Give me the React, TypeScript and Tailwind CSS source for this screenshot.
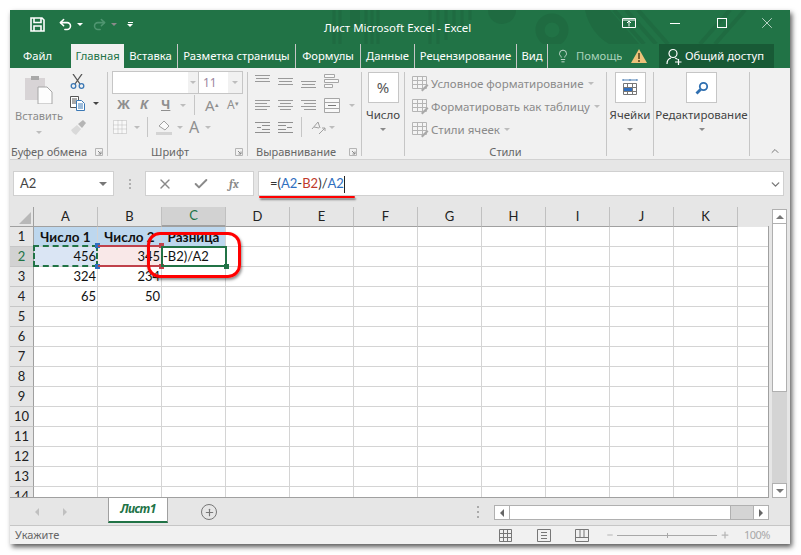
import { Lightbulb, Undo2, Redo2, X, Check, ChevronUp, ChevronDown, Plus, Minus } from "lucide-react";

const ui = { fontFamily: '"Noto Sans", "Open Sans", sans-serif' };
const cellFont = { fontFamily: 'Lato, "Open Sans", sans-serif' };

const Caret = ({ className = "" }: { className?: string }) => (
  <span className={`inline-block w-0 h-0 border-x-[3px] border-x-transparent border-t-[3px] border-t-[#8a8a8a] ${className}`} />
);

const Launcher = () => (
  <svg width="8" height="8" viewBox="0 0 8 8" className="shrink-0">
    <path d="M.5.5h7v7h-7z" fill="none" stroke="#b5b5b5" />
    <path d="M3 3l3 3M6 3.5V6H3.500" fill="none" stroke="#8a8a8a" />
  </svg>
);

const Lines = ({ rows, w = 16, h = 12, color = "#9a9a9a" }: { rows: [number, number, number][]; w?: number; h?: number; color?: string }) => (
  <svg width={w} height={h} viewBox={`0 0 ${w} ${h}`} className="shrink-0">
    {rows.map(([y, a, b], i) => (
      <path key={i} d={`M${a} ${y + 0.5}H${b}`} stroke={color} />
    ))}
  </svg>
);

const Sep = ({ className = "" }: { className?: string }) => <div className={`w-px bg-[#c6c6c6] ${className}`} />;

const Group = ({ width, label, launcher, labelClass = "justify-center", children }: { width: number; label: string; launcher?: boolean; labelClass?: string; children: React.ReactNode }) => (
  <div className="flex flex-col h-[84px] border-r border-[#c6c6c6] shrink-0" style={{ width }}>
    <div className="flex-1 min-h-0">{children}</div>
    <div className={`flex items-center h-[8px] text-[11px] text-[#666] whitespace-nowrap ${labelClass}`}>
      <span>{label}</span>
      {launcher && <span className="ml-auto mr-[4px] flex"><Launcher /></span>}
    </div>
  </div>
);

const BigButton = ({ width, label, children }: { width: number; label: string; children: React.ReactNode }) => (
  <Group width={width} label="">
    <div className="flex flex-col items-center">
      <div className="w-[31px] h-[31px] bg-white border border-[#c6c6c6] flex items-center justify-center">
        {children}
      </div>
      <div className="text-[11.500px] leading-[16px] mt-[4px] text-[#444] whitespace-nowrap">{label}</div>
      <Caret className="mt-[5px]" />
    </div>
  </Group>
);

const StyleRow = ({ label, icon }: { label: string; icon: React.ReactNode }) => (
  <div className="flex items-center h-[23px] gap-[2px] text-[11.500px] text-[#8a8a8a] whitespace-nowrap">
    <span className="w-[18px] flex justify-center">{icon}</span>
    <span>{label}</span>
    <Caret className="ml-[2px] border-t-[#bdbdbd]" />
  </div>
);

const TableIcon = () => (
  <svg width="17" height="16" viewBox="0 0 17 16">
    <path d="M.5.500h14v12h-14zM.5 4.500h14M.5 8.500h14M5.500.500v12M10.500.500v12" fill="#f4f4f4" stroke="#b5b5b5" />
    <path d="M9 14l6-6 1.500 1.500-6 6z" fill="#a9a9a9" />
  </svg>
);

const columns = ["A", "B", "C", "D", "E", "F", "G", "H", "I", "J", "K", ""];
const rows = Array.from({ length: 14 }, (_, i) => i + 1);
const cells: Record<string, { text: string; cls: string }> = {
  A1: { text: "Число 1", cls: "font-bold text-[13.500px] justify-center bg-[#bdd7ee]" },
  B1: { text: "Число 2", cls: "font-bold text-[13.500px] justify-center bg-[#bdd7ee]" },
  C1: { text: "Разница", cls: "font-bold text-[13.500px] justify-center bg-[#bdd7ee]" },
  A2: { text: "456", cls: "justify-end bg-[#dae5f4]" },
  B2: { text: "345", cls: "justify-end bg-[#f9e8e8]" },
  C2: { text: "-B2)/A2", cls: "justify-start bg-white" },
  A3: { text: "324", cls: "justify-end" },
  B3: { text: "234", cls: "justify-end" },
  A4: { text: "65", cls: "justify-end" },
  B4: { text: "50", cls: "justify-end" },
};

const Handle = ({ className }: { className: string }) => <span className={`absolute w-[5px] h-[5px] ${className}`} />;

export default function App() {
  return (
    <div className="w-[801px] h-[555px] bg-white pt-[10px] pl-[10px] overflow-hidden" style={ui}>
      <div className="w-[780px] h-[534px] flex flex-col bg-[#e6e6e6] shadow-[2px_3px_5px_rgba(0,0,0,0.65)]">
        {/* title bar */}
        <div className="relative h-[34px] bg-[#217346] flex items-center shrink-0 overflow-hidden text-white">
          <svg width="780" height="34" viewBox="0 0 780 34" className="absolute inset-0">
            <g fill="none" stroke="#1f6b41">
              <path d="M324 0v34M330 0v34M356 0v34M362 0v34M368 0v34M420 0v34M428 0v34M436 0v30M444 0v22M452 0v16M460 0v10" strokeWidth="3" />
              <path d="M340 0h10v18h-10z" fill="#1f6b41" stroke="none" />
              <circle cx="542" cy="20" r="12" strokeWidth="9" />
              <circle cx="492" cy="0" r="14" fill="#1f6b41" stroke="none" />
              <path d="M575 0c4 18 14 28 24 34h30L600 0z" fill="#1f6b41" stroke="none" />
              <path d="M604 0l30 34M616 0l30 34M628 0l30 34M690 34l30-34M705 34l30-34" strokeWidth="4" />
            </g>
          </svg>
          <div className="relative flex items-center w-[314px] pl-[20px] h-full pb-[6px]">
            <svg width="15" height="15" viewBox="0 0 15 15">
              <path d="M1 1h11l2 2v11H1z M4 1.500v4h7v-4 M4 14V9h7v5" fill="none" stroke="#fff" strokeWidth="1.600" />
            </svg>
            <Undo2 size={15} strokeWidth={2.500} className="ml-[13px]" />
            <Caret className="ml-[4px] border-t-white" />
            <Redo2 size={15} strokeWidth={2.500} className="ml-[9px] text-[#4f9570]" />
            <Caret className="ml-[4px] border-t-[#4f9570]" />
            <span className="ml-[10px] flex flex-col items-center gap-[1px]">
              <span className="w-[5px] h-px bg-white" />
              <Caret className="border-t-white" />
            </span>
          </div>
          <div className="relative text-[11.500px] whitespace-nowrap pt-[2px]">Лист Microsoft Excel - Excel</div>
          <div className="relative ml-auto flex items-center h-full pb-[8px] pr-[14px]">
            <svg width="14" height="10" viewBox="0 0 14 10" className="mr-[34px]">
              <path d="M.5.500h13v9h-13zM7 8.500V3.500M5 5l2-2 2 2M.5 2h13" fill="none" stroke="#fff" />
            </svg>
            <span className="w-[10px] h-px bg-white mr-[37px]" />
            <span className="w-[10px] h-[10px] border border-white mr-[31px]" />
            <X size={18} strokeWidth={0.900} />
          </div>
        </div>

        {/* tabs */}
        <div className="h-[24px] bg-[#217346] flex items-stretch text-white text-[11.250px] shrink-0 whitespace-nowrap">
          <div className="w-[61px] pl-[13px] flex items-center">Файл</div>
          <div className="w-[53px] bg-[#f1f1f1] text-[#217346] flex items-center justify-center">Главная</div>
          <div className="flex items-center h-full">
            <span className="w-[53px] text-center">Вставка</span>
            <Sep className="h-[24px] bg-[#a5c9b5]" />
            <span className="w-[117px] text-center">Разметка страницы</span>
            <Sep className="h-[24px] bg-[#a5c9b5]" />
            <span className="w-[64px] text-center">Формулы</span>
            <Sep className="h-[24px] bg-[#a5c9b5]" />
            <span className="w-[53px] text-center overflow-hidden">Данные</span>
            <Sep className="h-[24px] bg-[#a5c9b5]" />
            <span className="w-[101px] text-center">Рецензирование</span>
            <Sep className="h-[24px] bg-[#a5c9b5]" />
            <span className="w-[30px] text-center">Вид</span>
            <Sep className="h-[24px] bg-[#a5c9b5]" />
            <Lightbulb size={14} strokeWidth={1.200} className="ml-[8px]" />
            <span className="ml-[6px] w-[46px] overflow-hidden text-[#a8d2ba]">Помощь</span>
            <svg width="16" height="14" viewBox="0 0 16 14" className="ml-[9px]">
              <path d="M8 0l8 14H0z" fill="#eec27a" />
              <path d="M8 4v6M8 11v2" stroke="#5c4a20" strokeWidth="1.600" />
            </svg>
            <div className="ml-[12px] w-[115px] h-full bg-[#185a36] flex items-center pl-[7px] gap-[3px]">
              <svg width="16" height="17" viewBox="0 0 16 17" fill="none" stroke="#fff" strokeWidth="1.200">
                <circle cx="7" cy="5.500" r="4" />
                <path d="M1 16c0-3.500 2-5.500 4-6M9 10c1 .3 2 .8 2.500 1.500M9 14h6.500M12.500 11v6" />
              </svg>
              <span>Общий доступ</span>
            </div>
          </div>
        </div>

        {/* ribbon */}
        <div className="relative h-[92px] bg-[#f1f1f1] border-b border-[#d2d2d2] flex pt-[4px] shrink-0 text-[#777]">
          <Group width={98} label="Буфер обмена" launcher labelClass="pl-[1px]">
            <div className="flex">
              <div className="w-[58px] flex flex-col items-center pt-[2px]">
                <svg width="28" height="30" viewBox="0 0 28 30">
                  <path d="M0 4h20v22H0z" fill="#d8d4d6" />
                  <path d="M6 2h8v4H6z" fill="#a9a9a9" />
                  <path d="M13 13h9l5 5v12H13z" fill="#fdfdfd" stroke="#a6a6a6" />
                </svg>
                <div className="text-[11px] leading-[16px] mt-[4px] text-[#8a8a8a]">Вставить</div>
                <Caret className="mt-[7px] border-t-[#bdbdbd]" />
              </div>
              <div className="flex flex-col ml-[2px] pt-[2px] gap-[7px]">
                <svg width="15" height="15" viewBox="0 0 15 15" fill="none">
                  <path d="M3 0l7 10M12 0L5 10" stroke="#555" strokeWidth="1.300" />
                  <circle cx="3.500" cy="12" r="2.300" stroke="#3b78b5" strokeWidth="1.300" />
                  <circle cx="11.500" cy="12" r="2.300" stroke="#3b78b5" strokeWidth="1.300" />
                </svg>
                <div className="flex items-center">
                  <svg width="16" height="15" viewBox="0 0 16 15">
                    <path d="M.5.500h8v11h-8zM2 3h5M2 5h4M2 7h4" fill="#fff" stroke="#555" />
                    <path d="M6.500 4.500h5l3 3v7h-8z" fill="#fff" stroke="#3b78b5" />
                    <path d="M8 8h5M8 10h5M8 12h5" stroke="#3b78b5" />
                  </svg>
                  <Caret className="ml-[7px] border-t-[#444]" />
                </div>
                <svg width="16" height="16" viewBox="0 0 16 16" className="ml-[1px] mt-[1px]">
                  <path d="M0 11l6-5 4 4-5 6c-2-1-4-3-5-5z" fill="#d9d9d9" />
                  <path d="M7 5l4 4 4-5-3-3z" fill="#b5b5b5" />
                </svg>
              </div>
            </div>
          </Group>

          <Group width={140} label="Шрифт" launcher labelClass="pl-[43px]">
            <div className="pl-[4px]">
              <div className="flex w-[131px] h-[23px] -mt-[1px] border border-[#c6c6c6] bg-white">
                <div className="w-[75px]" />
                <div className="w-[10px] bg-[#f1f1f1] flex items-center justify-center"><Caret className="border-t-[#bdbdbd]" /></div>
                <div className="w-[1px] bg-[#c6c6c6]" />
                <div className="flex-1 pl-[4px] text-[12px] leading-[21px] text-[#9b86a0]">11</div>
                <div className="w-[14px] bg-[#f1f1f1] flex items-center justify-center"><Caret className="border-t-[#bdbdbd]" /></div>
              </div>
              <div className="flex items-center h-[22px] text-[13px] text-[#8f8f8f]">
                <b className="ml-[5px] w-[23px]">Ж</b>
                <b className="w-[21px] italic">К</b>
                <b className="w-[15px] underline">Ч</b>
                <Caret className="ml-[4px] border-t-[#bdbdbd]" />
                <Sep className="h-[20px] ml-[8px]" />
                <span className="ml-[10px] text-[15px] w-[22px]">A<sup className="text-[7px]">▴</sup></span>
                <span className="text-[12px]">A<sup className="text-[7px]">▾</sup></span>
              </div>
              <div className="flex items-center h-[22px] text-[#8f8f8f]">
                <svg width="14" height="14" viewBox="0 0 14 14" className="ml-[1px]">
                  <path d="M.5.500h13v13h-13zM5 .5v13M9 .5v13M.5 5h13M.5 9h13" fill="#f8f8f8" stroke="#bbb" strokeDasharray="1 1" />
                </svg>
                <Caret className="ml-[7px] border-t-[#bdbdbd]" />
                <Sep className="h-[20px] ml-[7px]" />
                <svg width="17" height="16" viewBox="0 0 17 16" className="ml-[8px]">
                  <path d="M3 7l5-5 5 5-4 4z" fill="#fafafa" stroke="#a0a0a0" />
                  <path d="M0 13h16v3H0z" fill="#d4d4d4" />
                </svg>
                <Caret className="ml-[4px] border-t-[#bdbdbd]" />
                <span className="ml-[6px] text-[16px] leading-none">A</span>
                <Caret className="ml-[6px] border-t-[#bdbdbd]" />
              </div>
            </div>
          </Group>

          <Group width={114} label="Выравнивание" launcher labelClass="pl-[8px]">
            <div className="pl-[7px] flex flex-col">
              <div className="flex items-start h-[22px] gap-[7px] pt-[2px]">
                <Lines rows={[[1, 0, 15], [4, 1, 14], [7, 0, 15]]} />
                <Lines rows={[[4, 0, 15], [7, 1, 14], [10, 0, 15]]} />
                <Lines rows={[[7, 0, 15], [10, 1, 14], [13, 0, 15]]} h={14} />
                <svg width="17" height="14" viewBox="0 0 17 14">
                  <path d="M.5.500h10v3H.5zM.5 5.500h14v3H.5zM.5 10.500h8v3H.5z" fill="#f8f8f8" stroke="#a6a6a6" />
                </svg>
              </div>
              <div className="flex items-center h-[22px] gap-[7px]">
                <Lines rows={[[1, 0, 15], [4, 0, 12], [7, 0, 15], [10, 0, 12]]} />
                <Lines rows={[[1, 0, 15], [4, 2, 13], [7, 0, 15], [10, 2, 13]]} />
                <Lines rows={[[1, 0, 15], [4, 3, 15], [7, 0, 15], [10, 3, 15]]} />
                <svg width="17" height="15" viewBox="0 0 17 15">
                  <path d="M.5.500h15v14H.5zM.5 4.500h15M.5 10.500h15" fill="#f8f8f8" stroke="#a6a6a6" />
                  <path d="M4 7.500h8" stroke="#777" />
                </svg>
                <Caret className="ml-[1px] border-t-[#bdbdbd]" />
              </div>
              <div className="flex items-center h-[22px] gap-[7px]">
                <Lines rows={[[1, 0, 15], [4, 7, 15], [6, 2, 6], [8, 7, 15], [11, 0, 15]]} color="#8f8f8f" />
                <Lines rows={[[1, 0, 15], [4, 0, 8], [6, 9, 14], [8, 0, 8], [11, 0, 15]]} color="#8f8f8f" />
                <Sep className="h-[20px]" />
                <svg width="15" height="15" viewBox="0 0 15 15" className="ml-[2px]">
                  <path d="M1 9l6-7 2 6M3 7l5 1M8 14l6-6M11 8h3v3" fill="none" stroke="#a0a0a0" />
                </svg>
                <Caret className="ml-[-4px] border-t-[#bdbdbd]" />
              </div>
            </div>
          </Group>

          <BigButton width={43} label="Число">
            <span className="text-[15px] text-[#555]">%</span>
          </BigButton>

          <Group width={202} label="Стили">
            <div className="pl-[6px]">
              <StyleRow label="Условное форматирование" icon={<TableIcon />} />
              <StyleRow label="Форматировать как таблицу" icon={<TableIcon />} />
              <StyleRow label="Стили ячеек" icon={<TableIcon />} />
            </div>
          </Group>

          <BigButton width={47} label="Ячейки">
            <svg width="16" height="17" viewBox="0 0 16 17">
              <path d="M1 1h14M1 0v2M15 0v2M8 0v2" stroke="#4a7fb5" />
              <path d="M1.500 4.500h13v11h-13zM1.500 8.500h13M1.500 12.500h13M5.500 4.500v11M10.500 4.500v11" fill="#fff" stroke="#777" />
              <path d="M2 9h8v3H2z" fill="#2f6fc0" />
            </svg>
          </BigButton>

          <BigButton width={96} label="Редактирование">
            <svg width="14" height="14" viewBox="0 0 14 14" fill="none" stroke="#2f6fb0">
              <circle cx="8.500" cy="5.500" r="3.700" strokeWidth="1.800" />
              <path d="M5.500 8.500L1.500 12.500" strokeWidth="2.800" />
            </svg>
          </BigButton>

          <ChevronUp size={12} strokeWidth={2} className="absolute right-[9px] bottom-[2px] text-[#7a7a7a]" />
        </div>

        {/* formula bar */}
        <div className="h-[47px] flex pt-[11px] pl-[3px] pr-[6px] shrink-0">
          <div className="w-[101px] h-[25px] bg-white border border-[#d0d0d0] flex items-center pl-[6px] pt-[1px] text-[13px] text-[#444]" style={cellFont}>
            A2
            <Caret className="ml-auto mr-[6px] border-x-[4px] border-t-[4px] border-t-[#777]" />
          </div>
          <div className="w-[31px] flex flex-col items-center justify-center gap-[2px] h-[25px]">
            <span className="w-[2px] h-[2px] bg-[#b0b0b0]" />
            <span className="w-[2px] h-[2px] bg-[#b0b0b0]" />
            <span className="w-[2px] h-[2px] bg-[#b0b0b0]" />
          </div>
          <div className="w-[109px] h-[25px] bg-white border border-[#d0d0d0] flex items-center pl-[11px] text-[#8a8a8a]">
            <X size={16} strokeWidth={2} />
            <Check size={16} strokeWidth={3} className="ml-[20px]" />
            <i className="ml-[20px] text-[12px] font-serif font-bold">fx</i>
          </div>
          <div className="relative ml-[4px] flex-1 h-[25px] bg-white border border-[#d0d0d0] flex items-center pl-[11px] pt-[1px] text-[13px] text-[#333]" style={cellFont}>
            <span>=(</span><span className="text-[#2f6fc0]">A2</span><span>-</span><span className="text-[#c0392b]">B2</span><span>)/</span><span className="text-[#2f6fc0]">A2</span>
            <span className="w-px h-[17px] bg-[#222]" />
            <ChevronDown size={13} strokeWidth={2.500} className="ml-auto mr-[1px] text-[#777]" />
            <span className="absolute left-0 top-[24px] w-[96px] h-[2px] bg-[#f00] rounded-full shadow-[1px_2px_2px_rgba(0,0,0,0.45)]" />
          </div>
        </div>

        {/* sheet */}
        <div className="flex h-[291px] shrink-0">
          <div className="relative w-[759px] h-full overflow-hidden bg-white text-[13px] text-[#111] border-b border-[#a0a0a0]" style={cellFont}>
            <div className="grid grid-cols-[24px_repeat(11,64px)_31px] grid-rows-[20px_repeat(14,20px)]">
              <div className="bg-[#e6e6e6] border-r border-b border-[#a0a0a0] flex items-end justify-end">
                <span className="w-0 h-0 border-l-[12px] border-l-transparent border-b-[12px] border-b-[#b8b8b8] m-[2px]" />
              </div>
              {columns.map((c, i) => (
                <div
                  key={i}
                  className={`flex items-center justify-center border-r border-[#c0c0c0] ${i === 11 ? "bg-[#e6e6e6] border-r-0 border-b border-b-[#e6e6e6]" : "border-b border-b-[#a0a0a0]"} ${c === "C" ? "bg-[#d2d2d2] border-b-2 border-b-[#217346] text-[#217346]" : i === 11 ? "" : "bg-[#e6e6e6] text-[#222]"}`}
                >
                  {c}
                </div>
              ))}
              {rows.map((r) => (
                <div key={r} className="contents">
                  <div className={`flex items-center justify-center pt-[1px] border-r border-b border-r-[#a0a0a0] border-b-[#c6c6c6] text-[#222] ${r === 2 ? "bg-[#d2d2d2] text-[#217346]" : "bg-[#e6e6e6]"}`}>{r}</div>
                  {columns.map((c, i) => {
                    const cell = cells[`${c}${r}`];
                    return (
                      <div key={i} className={`flex items-center px-[1px] pt-[1px] border-r border-b border-[#d4d4d4] whitespace-nowrap overflow-hidden ${i === 11 ? "border-r-0" : ""} ${cell?.cls ?? ""}`}>
                        {cell?.text}
                      </div>
                    );
                  })}
                </div>
              ))}
            </div>
            <div className="absolute left-[758px] top-[19px] bottom-0 w-px bg-[#a0a0a0]" />

            {/* range selections */}
            <div className="absolute left-[23px] top-[38px] w-[65px] h-[22px] border-2 border-dashed border-[#217346]" />
            <Handle className="left-[85px] top-[36px] bg-[#2f6fc0]" />
            <Handle className="left-[85px] top-[57px] bg-[#2f6fc0]" />
            <div className="absolute left-[88px] top-[38px] w-[64px] h-[22px] border-y-2 border-[#c0414b]" />
            <Handle className="left-[149px] top-[36px] bg-[#c0414b]" />
            <Handle className="left-[149px] top-[57px] bg-[#c0414b]" />
            <div className="absolute left-[151px] top-[39px] w-[66px] h-[21px] border-2 border-[#217346]" />
            <Handle className="left-[214px] top-[57px] bg-[#217346]" />

            {/* red annotation */}
            <div className="absolute left-[137px] top-[25px] w-[94px] h-[46px] rounded-[13px] border-[3px] border-[#f00] shadow-[1px_2px_3px_rgba(0,0,0,0.45)]" />
          </div>
          <div className="w-[21px] pl-[3px] pt-[2px] flex flex-col">
            <div className="w-[15px] h-[15px] bg-white border border-[#b0b0b0] flex items-center justify-center">
              <span className="w-0 h-0 border-x-[4px] border-x-transparent border-b-[4px] border-b-[#777]" />
            </div>
            <div className="w-[15px] h-[168px] bg-white border-x border-b border-[#b0b0b0]" />
            <div className="w-[15px] flex-1 bg-[#d4d4d4]" />
            <div className="w-[15px] h-[15px] bg-white border border-[#b0b0b0] flex items-center justify-center">
              <span className="w-0 h-0 border-x-[4px] border-x-transparent border-t-[4px] border-t-[#777]" />
            </div>
          </div>
        </div>

        {/* sheet tabs */}
        <div className="h-[28px] flex border-b border-[#c6c6c6] shrink-0 text-[#999]">
          <div className="flex items-start h-full pl-[25px] gap-[24px] pt-[10px] w-[98px]">
            <span className="w-0 h-0 border-y-[4px] border-y-transparent border-r-[4px] border-r-[#c0c0c0]" />
            <span className="w-0 h-0 border-y-[4px] border-y-transparent border-l-[4px] border-l-[#c0c0c0]" />
          </div>
          <div className="w-[60px] h-[26px] -mt-px bg-white border-x border-[#a0a0a0] border-b-2 border-b-[#217346] flex items-center justify-center text-[12px] tracking-[-0.6px] italic font-bold text-[#217346]">Лист1</div>
          <div className="ml-[33px] mt-[6px] w-[16px] h-[16px] rounded-full border border-[#777] flex items-center justify-center">
            <Plus size={11} strokeWidth={2.500} className="text-[#777]" />
          </div>
          <div className="ml-[260px] mt-[8px] flex flex-col gap-[3px]">
            <span className="w-[2px] h-[2px] bg-[#aaa]" />
            <span className="w-[2px] h-[2px] bg-[#aaa]" />
            <span className="w-[2px] h-[2px] bg-[#aaa]" />
          </div>
          <div className="ml-[15px] mt-[7px] w-[275px] h-[15px] flex border border-[#b0b0b0] bg-[#d4d4d4]">
            <div className="w-[15px] bg-white border-r border-[#b0b0b0] flex items-center justify-center">
              <span className="w-0 h-0 border-y-[4px] border-y-transparent border-r-[4px] border-r-[#666]" />
            </div>
            <div className="w-[221px] bg-white border-r border-[#b0b0b0]" />
            <div className="ml-auto w-[15px] bg-white border-l border-[#b0b0b0] flex items-center justify-center">
              <span className="w-0 h-0 border-y-[4px] border-y-transparent border-l-[4px] border-l-[#666]" />
            </div>
          </div>
        </div>

        {/* status bar */}
        <div className="flex-1 bg-[#f1f1f1] flex items-center text-[11px] text-[#666] pl-[5px]">
          <span>Укажите</span>
          <div className="ml-auto flex items-center pr-[20px]">
            <svg width="14" height="13" viewBox="0 0 14 13">
              <path d="M.5.500h12v12H.5zM4.500.500v12M8.500.500v12M.5 4.500h12M.5 8.500h12" fill="none" stroke="#777" />
            </svg>
            <svg width="14" height="13" viewBox="0 0 14 13" className="ml-[24px]">
              <path d="M.5.500h13v12H.5z" fill="none" stroke="#777" />
              <path d="M4 3.500h6M4 6.500h6M4 9.500h6" stroke="#777" />
            </svg>
            <svg width="14" height="13" viewBox="0 0 14 13" className="ml-[24px]">
              <path d="M.5.500h13v12H.5zM.5 8.500h13M5 .5v8M9 .5v8" fill="none" stroke="#777" />
            </svg>
            <Minus size={8} strokeWidth={3} className="ml-[17px] text-[#b5b5b5]" />
            <div className="relative ml-[3px] w-[100px] h-px bg-[#a8a8a8]">
              <span className="absolute left-1/2 -top-[2px] w-px h-[5px] bg-[#a8a8a8]" />
            </div>
            <Plus size={10} strokeWidth={3} className="ml-[3px] text-[#b5b5b5]" />
            <span className="ml-[14px] text-[#a8a8a8] tracking-[-0.5px]">100%</span>
          </div>
        </div>
      </div>
    </div>
  );
}
